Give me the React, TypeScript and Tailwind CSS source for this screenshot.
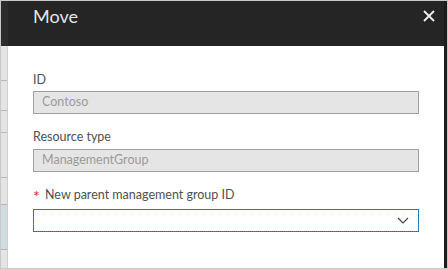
export default function App() {
  return (
    <div
      className="w-[448px] h-[269px] bg-[#c8c8c8] p-px overflow-hidden"
      style={{ fontFamily: 'Lato, "Noto Sans", sans-serif' }}
    >
      <div className="flex h-full">
        {/* background page strip */}
        <div className="w-[7px] flex flex-col shrink-0">
          <div className="h-[45px] bg-[#2c2c2c]" />
          <div className="flex-1 flex flex-col bg-[#e4e4e4] border-r border-[#cfcfcf]">
            <div className="h-[35px] border-b border-[#b8b8b8]" />
            <div className="h-[30px] border-b border-[#b8b8b8]" />
            <div className="h-[22px] border-b border-[#b8b8b8]" />
            <div className="h-[45px] border-b border-[#b8b8b8]" />
            <div className="h-[27px] border-b border-[#b8b8b8]" />
            <div className="h-[45px] bg-[#cfdde2] border-b border-[#b8b8b8]" />
            <div className="flex-1" />
          </div>
        </div>

        {/* blade */}
        <div className="flex-1 flex flex-col">
          <div className="h-[45px] bg-[#252525] flex items-start justify-between pl-[25px] pr-[9px] pt-[3px]">
            <span className="text-[18px] text-[#e6e6e6] leading-[24px]">Move</span>
            <svg width="12" height="12" viewBox="0 0 12 12" className="mt-[6px]">
              <path d="M1 1 L11 11 M11 1 L1 11" stroke="#f0f0f0" strokeWidth="1.8" />
            </svg>
          </div>
          <div className="flex-1 bg-white pl-[25px] pr-[25px] pt-[26px] text-[12.5px]">
            <div className="text-[#505050] leading-[16px]">ID</div>
            <div className="mt-[3px] h-[23px] bg-[#e5e5e5] border border-[#a0a0a0] flex items-center pl-[8px] text-[#9a9a9a]">
              Contoso
            </div>
            <div className="mt-[15px] text-[#505050] leading-[16px]">Resource type</div>
            <div className="mt-[4px] h-[23px] bg-[#e5e5e5] border border-[#a0a0a0] flex items-center pl-[8px] text-[#9a9a9a]">
              ManagementGroup
            </div>
            <div className="mt-[15px] text-[#505050] leading-[16px] flex items-start">
              <span className="text-[#e81123] w-[12px] text-[16px] leading-[18px]">*</span>
              <span>New parent management group ID</span>
            </div>
            <div className="mt-[4px] h-[23px] border border-[#1a9ad8] outline-1 outline-dotted outline-[#1d6a9a] -outline-offset-1 flex items-center justify-end pr-[9px]">
              <svg width="12" height="7" viewBox="0 0 12 7">
                <path d="M1 1 L6 6 L11 1" stroke="#444" strokeWidth="1.2" fill="none" />
              </svg>
            </div>
          </div>
        </div>

        <div className="w-[3px] bg-[#1c1c1c] shrink-0" />
      </div>
    </div>
  );
}
